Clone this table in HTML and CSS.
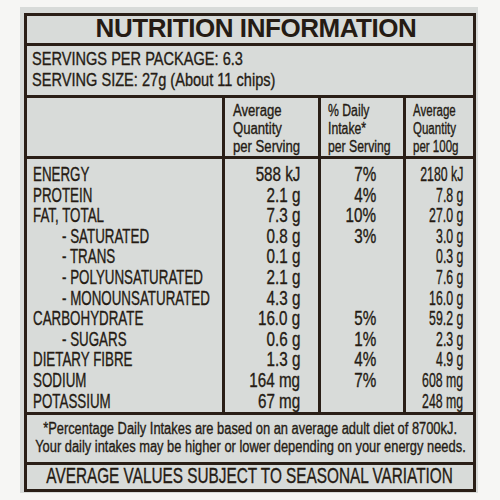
FILE: index.html
```html
<!DOCTYPE html>
<html lang="en">

<head>
    <meta charset="UTF-8">
    <meta name="viewport" content="width=device-width, initial-scale=1.0">
    <title>Nutrition Information</title>
    <link rel="stylesheet" href="styles.css">
</head>

<body>
    <div class="label">
        <div class="box">
            <h1 class="title">NUTRITION INFORMATION</h1>

            <div class="servings">
                <p class="sq">SERVINGS PER PACKAGE: 6.3</p>
                <p class="sq">SERVING SIZE: 27g (About 11 chips)</p>
            </div>

            <div class="row head">
                <div class="c"></div>
                <div class="c q"><span class="sq">Average<br>Quantity<br>per Serving</span></div>
                <div class="c di"><span class="sq">% Daily<br>Intake*<br>per Serving</span></div>
                <div class="c h100"><span class="sq">Average<br>Quantity<br>per 100g</span></div>
            </div>

            <div class="facts">
                <div class="row">
                    <div class="c name"><span class="sq">ENERGY</span></div>
                    <div class="c num q"><span class="sq">588 kJ</span></div>
                    <div class="c num di"><span class="sq">7%</span></div>
                    <div class="c num h100"><span class="sq">2180 kJ</span></div>
                </div>
                <div class="row">
                    <div class="c name"><span class="sq">PROTEIN</span></div>
                    <div class="c num q"><span class="sq">2.1 g</span></div>
                    <div class="c num di"><span class="sq">4%</span></div>
                    <div class="c num h100"><span class="sq">7.8 g</span></div>
                </div>
                <div class="row">
                    <div class="c name"><span class="sq">FAT, TOTAL</span></div>
                    <div class="c num q"><span class="sq">7.3 g</span></div>
                    <div class="c num di"><span class="sq">10%</span></div>
                    <div class="c num h100"><span class="sq">27.0 g</span></div>
                </div>
                <div class="row">
                    <div class="c name sub"><span class="sq">- SATURATED</span></div>
                    <div class="c num q"><span class="sq">0.8 g</span></div>
                    <div class="c num di"><span class="sq">3%</span></div>
                    <div class="c num h100"><span class="sq">3.0 g</span></div>
                </div>
                <div class="row">
                    <div class="c name sub"><span class="sq">- TRANS</span></div>
                    <div class="c num q"><span class="sq">0.1 g</span></div>
                    <div class="c num di"></div>
                    <div class="c num h100"><span class="sq">0.3 g</span></div>
                </div>
                <div class="row">
                    <div class="c name sub"><span class="sq">- POLYUNSATURATED</span></div>
                    <div class="c num q"><span class="sq">2.1 g</span></div>
                    <div class="c num di"></div>
                    <div class="c num h100"><span class="sq">7.6 g</span></div>
                </div>
                <div class="row">
                    <div class="c name sub"><span class="sq">- MONOUNSATURATED</span></div>
                    <div class="c num q"><span class="sq">4.3 g</span></div>
                    <div class="c num di"></div>
                    <div class="c num h100"><span class="sq">16.0 g</span></div>
                </div>
                <div class="row">
                    <div class="c name"><span class="sq">CARBOHYDRATE</span></div>
                    <div class="c num q"><span class="sq">16.0 g</span></div>
                    <div class="c num di"><span class="sq">5%</span></div>
                    <div class="c num h100"><span class="sq">59.2 g</span></div>
                </div>
                <div class="row">
                    <div class="c name sub"><span class="sq">- SUGARS</span></div>
                    <div class="c num q"><span class="sq">0.6 g</span></div>
                    <div class="c num di"><span class="sq">1%</span></div>
                    <div class="c num h100"><span class="sq">2.3 g</span></div>
                </div>
                <div class="row">
                    <div class="c name"><span class="sq">DIETARY FIBRE</span></div>
                    <div class="c num q"><span class="sq">1.3 g</span></div>
                    <div class="c num di"><span class="sq">4%</span></div>
                    <div class="c num h100"><span class="sq">4.9 g</span></div>
                </div>
                <div class="row">
                    <div class="c name"><span class="sq">SODIUM</span></div>
                    <div class="c num q"><span class="sq">164 mg</span></div>
                    <div class="c num di"><span class="sq">7%</span></div>
                    <div class="c num h100"><span class="sq">608 mg</span></div>
                </div>
                <div class="row">
                    <div class="c name"><span class="sq">POTASSIUM</span></div>
                    <div class="c num q"><span class="sq">67 mg</span></div>
                    <div class="c num di"></div>
                    <div class="c num h100"><span class="sq">248 mg</span></div>
                </div>
            </div>

            <div class="note">
                <p class="line"><span>*Percentage Daily Intakes are based on an average adult diet of 8700kJ.</span></p>
                <p class="line"><span>Your daily intakes may be higher or lower depending on your energy needs.</span></p>
            </div>

            <p class="season"><span>AVERAGE VALUES SUBJECT TO SEASONAL VARIATION</span></p>
        </div>
    </div>
</body>

</html>
```

FILE: styles.css
```css
* {
    margin: 0;
    padding: 0;
    box-sizing: border-box;
}

body {
    background-color: #f6f6f4;
    font-family: "Liberation Sans", Arial, sans-serif;
    color: #251b14;
}

/* grey card */
.label {
    margin: 7px 0 0 20px;
    width: 458px;
    height: 486px;
    padding: 6px 2px 1px 4px;
    background-color: #d8dbd9;
}

.box {
    height: 100%;
    display: flex;
    flex-direction: column;
    border: 3px solid #2a1f17;
    -webkit-text-stroke: 0.35px #251b14;
}

.title {
    height: 30px;
    padding-left: 12px;
    border-bottom: 3px solid #2a1f17;
    font-size: 26px;
    line-height: 24px;
    letter-spacing: -0.45px;
    text-align: center;
    -webkit-text-stroke: 0;
}

/* condensed text */
.sq {
    display: block;
    white-space: nowrap;
    transform-origin: left center;
}

.servings {
    height: 52px;
    padding: 3px 0 0 5px;
    border-bottom: 3px solid #2a1f17;
    font-size: 18px;
    line-height: 21px;
}

.servings .sq {
    transform: scaleX(.81);
}

/* table */
.row {
    display: grid;
    grid-template-columns: 195px 96px 85px 70px;
}

.c + .c {
    border-left: 3px solid #2a1f17;
}

.head {
    height: 61px;
    border-bottom: 3px solid #2a1f17;
    font-size: 16px;
    line-height: 18px;
}

.head .c {
    padding: 4px 0 0 8px;
}

.head .di, .head .h100 {
    padding-left: 7px;
}

.head .q .sq {
    transform: scaleX(.82);
}

.head .di .sq {
    transform: scaleX(.765);
}

.head .h100 .sq {
    transform: scaleX(.72);
}

.facts {
    height: 256px;
    display: flex;
    flex-direction: column;
    border-bottom: 3px solid #2a1f17;
    font-size: 19.5px;
    line-height: 20.6px;
}

.facts .row:first-child .c {
    padding-top: 5px;
}

.facts .row:last-child {
    flex-grow: 1;
}

.name {
    padding-left: 6px;
}

.name.sub {
    padding-left: 35px;
}

.name .sq {
    transform: scaleX(.685);
}

.num {
    display: flex;
    justify-content: flex-end;
}

.num .sq {
    transform-origin: right center;
}

.num.q {
    padding-right: 18px;
}

.num.q .sq {
    transform: scaleX(.78);
}

.num.di {
    padding-right: 27px;
}

.num.di .sq {
    transform: scaleX(.78);
}

.num.h100 {
    padding-right: 10px;
}

.num.h100 .sq {
    transform: scaleX(.63);
}

/* footer */
.note {
    height: 50px;
    padding-top: 5px;
    border-bottom: 3px solid #2a1f17;
    font-size: 16px;
    line-height: 18px;
}

.line, .season {
    display: flex;
    justify-content: center;
}

.line span, .season span {
    white-space: nowrap;
    transform: scaleX(.805);
}

.season {
    flex-grow: 1;
    font-size: 22px;
    line-height: 22px;
}

.season span {
    transform: scaleX(.697);
}
```
